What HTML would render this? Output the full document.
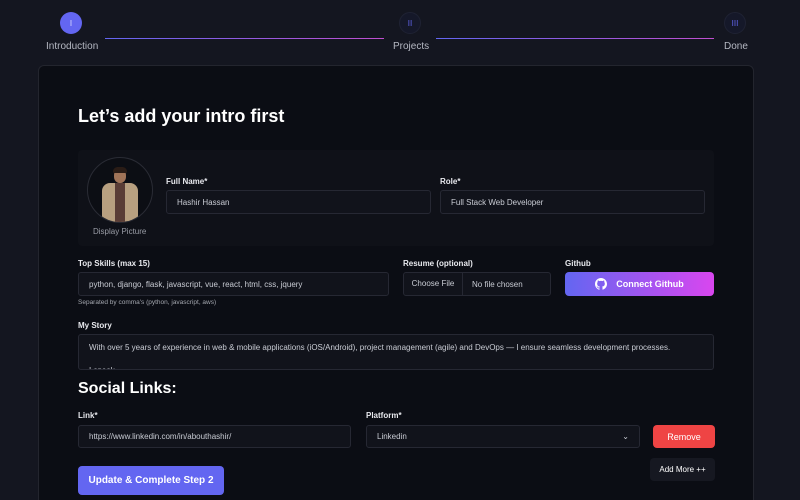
<!DOCTYPE html>
<html style="width:800px;height:500px;overflow:hidden"><head><meta charset="utf-8"><style>
*{box-sizing:border-box;margin:0;padding:0}
body{width:800px;height:500px;overflow:hidden;background:#141620;font-family:"Liberation Sans",sans-serif;color:#e5e7eb;position:relative}
.abs{position:absolute}
.circ{border-radius:50%;width:22px;height:22px;display:flex;align-items:center;justify-content:center;font-size:8px}
.lbl{font-size:10px;color:#b5b8c2}
.line{height:1px;background:linear-gradient(90deg,#6366f1,#c04fd0)}
.card{left:38px;top:65px;width:716px;height:460px;background:#0b0d14;border:1px solid #23252e;border-radius:6px}
.flab{font-size:8px;font-weight:bold;color:#e8e9ee}
.inp{background:#11131b;border:1px solid #262833;border-radius:3px;font-size:8px;color:#c9ccd4;display:flex;align-items:center;padding-left:10px}
.btn{border-radius:4px;display:flex;align-items:center;justify-content:center;font-size:9px;color:#fff}
</style></head><body>
<div class="abs circ" style="left:60px;top:12px;background:#6366f1;color:#dcdcff">I</div>
<div class="abs circ" style="left:399px;top:12px;background:#151829;color:#6366f1;border:1px solid #1f2233">II</div>
<div class="abs circ" style="left:724px;top:12px;background:#151829;color:#6366f1;border:1px solid #1f2233">III</div>
<div class="abs lbl" style="left:46px;top:41px">Introduction</div>
<div class="abs lbl" style="left:393px;top:41px">Projects</div>
<div class="abs lbl" style="left:724px;top:41px">Done</div>
<div class="abs line" style="left:105px;top:38px;width:279px"></div>
<div class="abs line" style="left:436px;top:38px;width:278px"></div>
<div class="abs card"></div>
<div class="abs" style="left:78px;top:106px;font-size:18px;font-weight:bold;color:#fff">Let’s add your intro first</div>
<div class="abs" style="left:78px;top:150px;width:636px;height:96px;background:#0f1118;border-radius:4px"></div>
<div class="abs" style="left:87px;top:157px;width:66px;height:66px;border-radius:50%;border:1px solid #2a2c35;overflow:hidden;background:#0c0e14">
 <div class="abs" style="left:26px;top:11px;width:12px;height:14px;border-radius:45%;background:#a07458"></div>
 <div class="abs" style="left:25px;top:9px;width:14px;height:6px;border-radius:6px 6px 2px 2px;background:#2a1c16"></div>
 <div class="abs" style="left:14px;top:25px;width:36px;height:45px;border-radius:8px 8px 0 0;background:#b8a080"></div>
 <div class="abs" style="left:27px;top:25px;width:10px;height:45px;background:#5a3d36"></div>
</div>
<div class="abs" style="left:93px;top:227px;font-size:8px;color:#9a9da6">Display Picture</div>
<div class="abs flab" style="left:166px;top:177px">Full Name*</div>
<div class="abs inp" style="left:166px;top:190px;width:265px;height:24px">Hashir Hassan</div>
<div class="abs flab" style="left:440px;top:177px">Role*</div>
<div class="abs inp" style="left:440px;top:190px;width:265px;height:24px">Full Stack Web Developer</div>
<div class="abs flab" style="left:78px;top:259px">Top Skills (max 15)</div>
<div class="abs inp" style="left:78px;top:272px;width:311px;height:24px">python, django, flask, javascript, vue, react, html, css, jquery</div>
<div class="abs" style="left:78px;top:299px;font-size:6.5px;color:#a3a6ae">Separated by comma's (python, javascript, aws)</div>
<div class="abs flab" style="left:403px;top:259px">Resume (optional)</div>
<div class="abs inp" style="left:403px;top:272px;width:148px;height:24px;padding-left:0"><span style="width:59px;text-align:center;border-right:1px solid #262833;line-height:22px">Choose File</span><span style="padding-left:9px">No file chosen</span></div>
<div class="abs flab" style="left:565px;top:259px">Github</div>
<div class="abs btn" style="left:565px;top:272px;width:149px;height:24px;background:linear-gradient(90deg,#6366f1,#d946ef);font-weight:bold">
<svg width="12" height="12" viewBox="0 0 16 16" style="margin-right:9px"><path fill="#fff" d="M8 0C3.6 0 0 3.6 0 8c0 3.5 2.3 6.5 5.5 7.6.4.1.5-.2.5-.4v-1.4c-2.2.5-2.7-1-2.7-1-.4-.9-.9-1.2-.9-1.2-.7-.5.1-.5.1-.5.8.1 1.2.8 1.2.8.7 1.200 1.9.9 2.3.7.1-.5.3-.9.5-1.1-1.8-.2-3.6-.9-3.6-4 0-.9.3-1.6.8-2.1-.1-.2-.4-1 .1-2.1 0 0 .7-.2 2.2.8.6-.2 1.3-.3 2-.3s1.4.1 2 .3c1.5-1 2.2-.8 2.2-.8.4 1.1.2 1.9.1 2.1.5.6.8 1.3.8 2.1 0 3.1-1.9 3.7-3.600 3.9.3.3.5.8.5 1.5v2.2c0 .2.1.5.6.4C13.7 14.5 16 11.5 16 8c0-4.400-3.6-8-8-8z"/></svg>Connect Github</div>
<div class="abs flab" style="left:78px;top:321px">My Story</div>
<div class="abs inp" style="left:78px;top:334px;width:636px;height:36px;align-items:flex-start;padding-top:8px;overflow:hidden;flex-direction:column"><div>With over 5 years of experience in web &amp; mobile applications (iOS/Android), project management (agile) and DevOps — I ensure seamless development processes.</div><div style="margin-top:14px">I speak</div></div>
<div class="abs" style="left:78px;top:380px;font-size:16px;font-weight:bold;color:#fff">Social Links:</div>
<div class="abs flab" style="left:78px;top:411px">Link*</div>
<div class="abs inp" style="left:78px;top:425px;width:273px;height:23px">https://www.linkedin.com/in/abouthashir/</div>
<div class="abs flab" style="left:366px;top:411px">Platform*</div>
<div class="abs inp" style="left:366px;top:425px;width:274px;height:23px">Linkedin<span style="position:absolute;right:10px;font-size:8px">⌄</span></div>
<div class="abs btn" style="left:653px;top:425px;width:62px;height:23px;background:#ef4444">Remove</div>
<div class="abs btn" style="left:650px;top:458px;width:65px;height:23px;background:#161821;font-size:8px">Add More ++</div>
<div class="abs btn" style="left:78px;top:466px;width:146px;height:29px;background:#6366f1;font-size:10px;font-weight:bold">Update &amp; Complete Step 2</div>
</body></html>
